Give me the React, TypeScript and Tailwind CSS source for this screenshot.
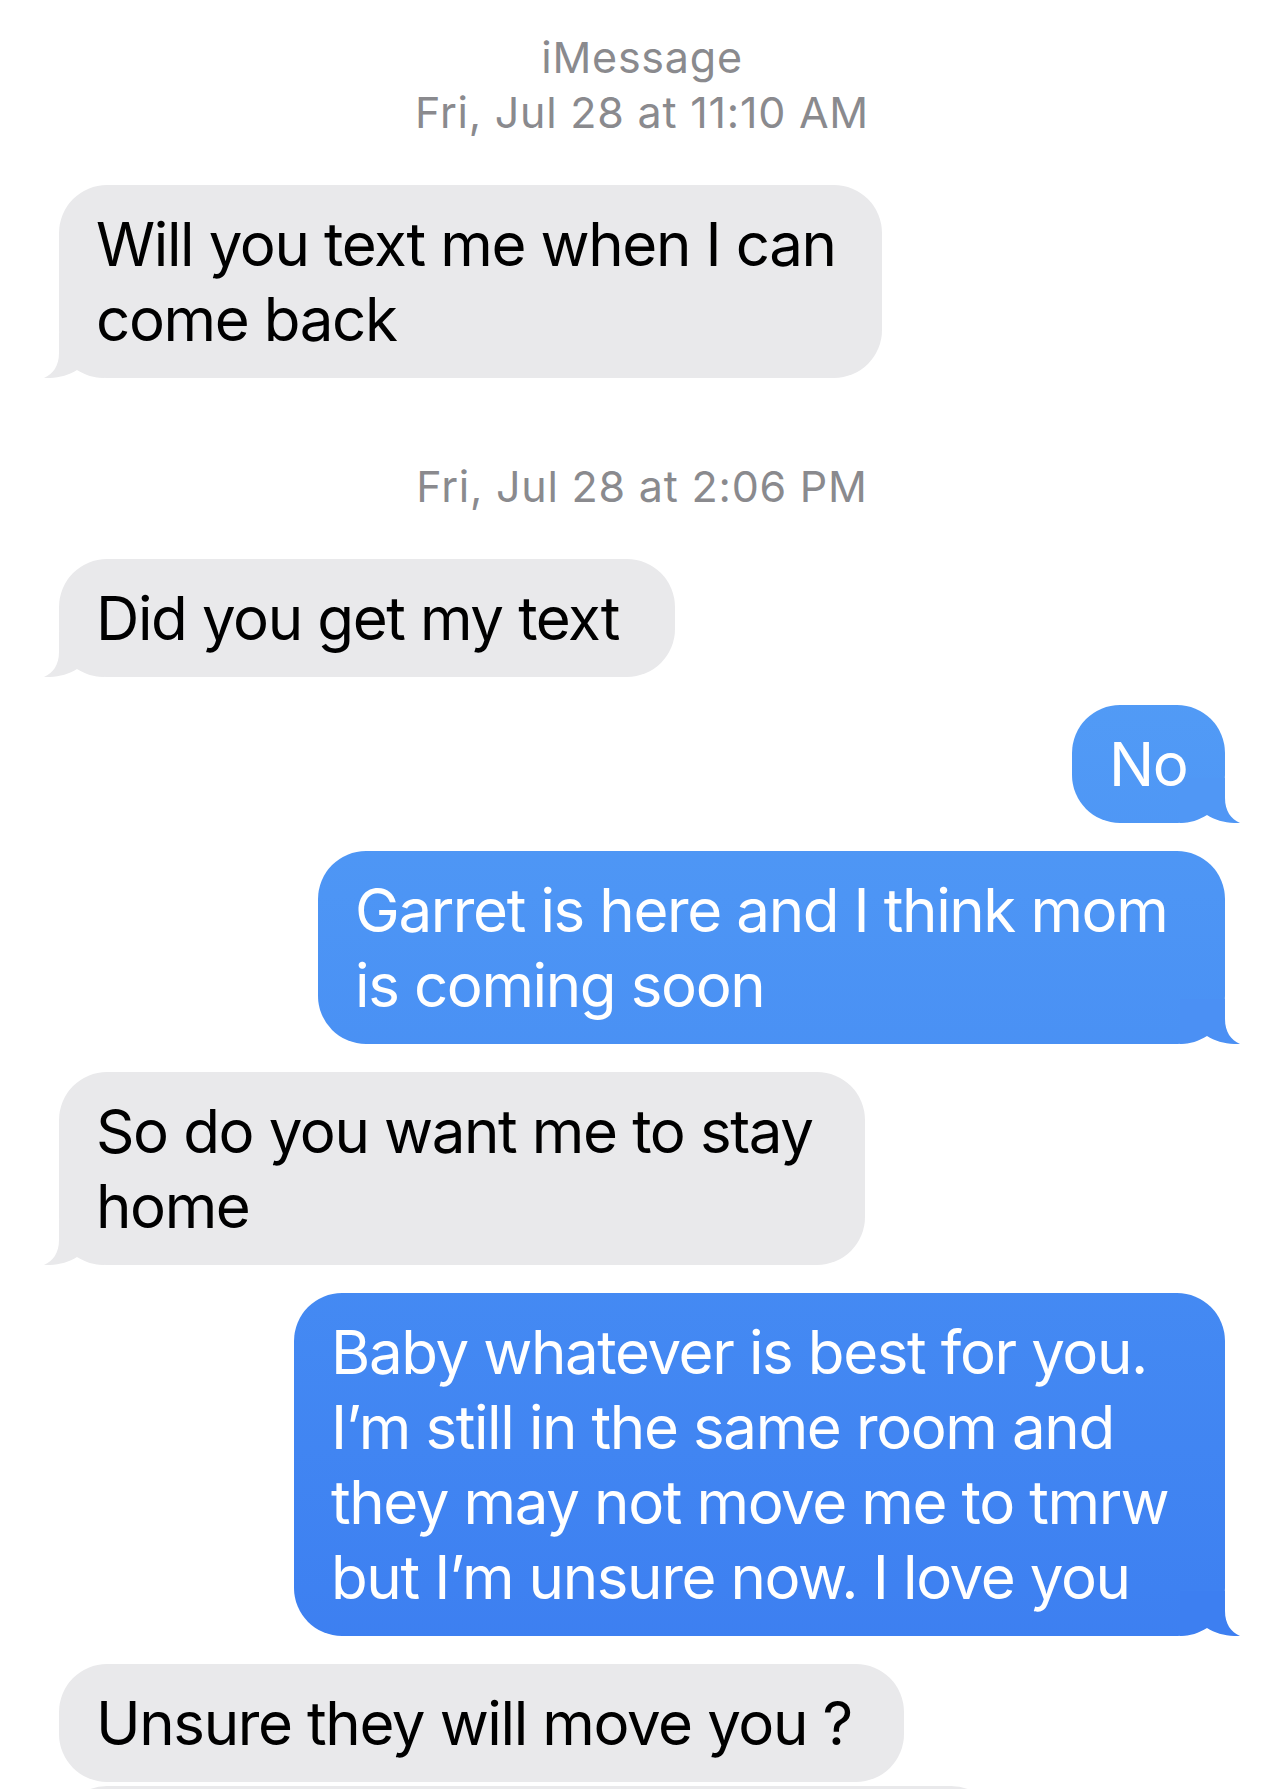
import React from "react";

type Item =
  | { kind: "stamp"; lines: string[]; mt: string }
  | { kind: "msg"; from: "me" | "them"; lines: string[]; width: string; mt: string; tail: boolean; tailFill?: string };

const items: Item[] = [
  { kind: "stamp", lines: ["iMessage", "Fri, Jul 28 at 11:10 AM"], mt: "mt-[30px]" },
  { kind: "msg", from: "them", lines: ["Will you text me when I can", "come back"], width: "w-[823px]", mt: "mt-[45px]", tail: true },
  { kind: "stamp", lines: ["Fri, Jul 28 at 2:06 PM"], mt: "mt-[81px]" },
  { kind: "msg", from: "them", lines: ["Did you get my text"], width: "w-[616px]", mt: "mt-[45px]", tail: true },
  { kind: "msg", from: "me", lines: ["No"], width: "w-[153px]", mt: "mt-[28px]", tail: true, tailFill: "#5097f5" },
  {
    kind: "msg",
    from: "me",
    lines: ["Garret is here and I think mom", "is coming soon"],
    width: "w-[907px]",
    mt: "mt-[28px]",
    tail: true,
    tailFill: "#4b90f4",
  },
  { kind: "msg", from: "them", lines: ["So do you want me to stay", "home"], width: "w-[806px]", mt: "mt-[28px]", tail: true },
  {
    kind: "msg",
    from: "me",
    lines: [
      "Baby whatever is best for you.",
      "I’m still in the same room and",
      "they may not move me to tmrw",
      "but I’m unsure now. I love you",
    ],
    width: "w-[931px]",
    mt: "mt-[28px]",
    tail: true,
    tailFill: "#3d7ff1",
  },
  { kind: "msg", from: "them", lines: ["Unsure they will move you ?"], width: "w-[845px]", mt: "mt-[28px]", tail: false },
  { kind: "msg", from: "them", lines: [""], width: "w-[940px]", mt: "mt-[4px]", tail: false },
];

const Tail = ({ fill, mine }: { fill: string; mine: boolean }) => (
  <svg
    viewBox="0 0 60 45"
    className={
      mine
        ? "absolute bottom-0 right-[-15px] w-[60px] h-[45px] -scale-x-100"
        : "absolute bottom-0 left-[-15px] w-[60px] h-[45px]"
    }
  >
    <path d="M15 0 L15 20 C15 33 9 41 0 45 C12 45.5 24 43 33 37 C41 42 50 45 60 45 L60 0 Z" fill={fill} />
  </svg>
);

const Bubble = ({ item }: { item: Extract<Item, { kind: "msg" }> }) => {
  const mine = item.from === "me";
  return (
    <div className={`flex ${item.mt} ${mine ? "justify-end pr-[59px]" : "justify-start pl-[59px]"}`}>
      <div
        className={`relative ${item.width} rounded-[48px] pl-[37px] pr-[20px] py-[21.5px] ${
          mine ? "bg-fixed bg-linear-to-b from-[#62aef9] to-[#3a7bf0] text-white" : "bg-[#e9e9eb] text-black"
        }`}
      >
        {item.tail && <Tail mine={mine} fill={mine ? item.tailFill ?? "#4b90f4" : "#e9e9eb"} />}
        <div className="relative text-[60px] leading-[75px] tracking-[-0.023em] whitespace-nowrap">
          {item.lines.map((l, i) => (
            <div key={i}>{l || "\u00a0"}</div>
          ))}
        </div>
      </div>
    </div>
  );
};

export default function App() {
  return (
    <div className="w-[1284px] h-[1789px] overflow-hidden bg-white [font-family:Inter,'Liberation_Sans',sans-serif]">
      {items.map((item, i) =>
        item.kind === "stamp" ? (
          <div key={i} className={`${item.mt} text-center text-[43px] leading-[55px] tracking-[0.018em] text-[#8a8a8e]`}>
            {item.lines.map((l) => (
              <div key={l}>{l}</div>
            ))}
          </div>
        ) : (
          <Bubble key={i} item={item} />
        )
      )}
    </div>
  );
}
